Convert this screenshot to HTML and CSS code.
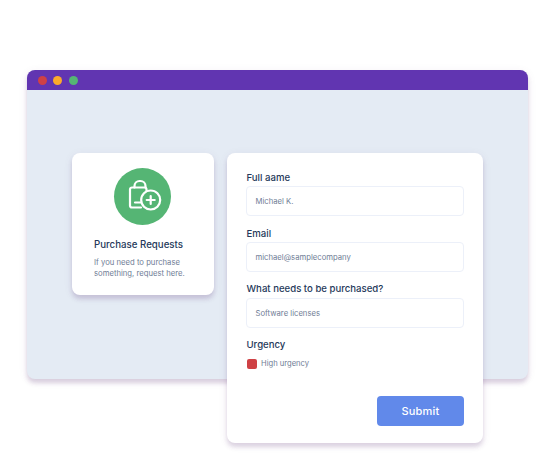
FILE: index.html
```html
<!DOCTYPE html>
<html lang="en">
<head>
<meta charset="utf-8">
<title>Purchase Requests</title>
<link rel="stylesheet" href="styles.css">
</head>
<body>
<div class="window">
  <div class="titlebar">
    <span class="dot dot-red"></span>
    <span class="dot dot-amber"></span>
    <span class="dot dot-green"></span>
  </div>
  <div class="content">
    <section class="card intro">
      <div class="badge">
        <svg class="badge-icon" viewBox="0 0 36 36" width="36" height="36" fill="none" stroke="#fff" stroke-width="2.200" stroke-linecap="round" stroke-linejoin="round">
          <path d="M14 29.500H5a2 2 0 0 1-2-2V11.500a2 2 0 0 1 2-2h12.500a2 2 0 0 1 2 2v1.500"/>
          <path d="M7.500 9.500V8a5 5 0 0 1 5-5h1a5 5 0 0 1 5 5v1.500"/>
          <path d="M8 24.500h5.500"/>
          <circle cx="23.700" cy="22" r="9.500"/>
          <path d="M23.700 18v8M19.700 22h8"/>
        </svg>
      </div>
      <h2 class="intro-title">Purchase Requests</h2>
      <p class="intro-text">If you need to purchase something, request here.</p>
    </section>
    <section class="card form">
      <div class="label">Full aame</div>
      <div class="field">Michael K.</div>
      <div class="label">Email</div>
      <div class="field">michael@samplecompany</div>
      <div class="label label-tight">What needs to be purchased?</div>
      <div class="field">Software licenses</div>
      <div class="label label-tight">Urgency</div>
      <div class="check-row"><span class="check"></span><span class="check-text">High urgency</span></div>
      <div class="actions"><button class="submit" type="button">Submit</button></div>
    </section>
  </div>
</div>
</body>
</html>
```
FILE: styles.css
```css
* { box-sizing: border-box; }
html, body { margin: 0; padding: 0; }
body {
  width: 555px;
  height: 475px;
  overflow: hidden;
  background: #fff;
  padding: 70px 27px 0;
  font-family: Inter, "Liberation Sans", sans-serif;
}
.window {
  width: 501px;
  height: 309px;
  border-radius: 8px;
  background: #e4ebf4;
  box-shadow: 0 4px 4px rgba(96, 54, 120, 0.2), 0 2px 10px rgba(96, 54, 120, 0.08);
}
.titlebar {
  height: 20px;
  background: #6135b1;
  border-radius: 8px 8px 0 0;
  display: flex;
  align-items: center;
  gap: 6.500px;
  padding-left: 10.500px;
}
.dot { width: 9px; height: 9px; border-radius: 50%; }
.dot-red { background: #cf4145; }
.dot-amber { background: #fcaa2b; }
.dot-green { background: #55b574; }
.content {
  display: flex;
  align-items: flex-start;
  gap: 12.500px;
  padding: 63px 0 0 45px;
}
.card {
  background: #fff;
  border-radius: 8px;
  box-shadow: 0 4px 4px rgba(96, 54, 120, 0.18), 0 2px 10px rgba(96, 54, 120, 0.08);
}
.intro {
  width: 142px;
  height: 142px;
  padding: 15px 22px 0;
}
.badge {
  width: 57px;
  height: 57px;
  margin: 0 0 0 20px;
  border-radius: 50%;
  background: #55b574;
  padding: 10px 0 0 13px;
}
.badge-icon { display: block; }
.intro-title {
  margin: 13px 0 0;
  font-size: 9.700px;
  line-height: 14px;
  font-weight: 500;
  color: #25395a;
  white-space: nowrap;
}
.intro-text {
  margin: 5px -10px 0 0;
  font-size: 7.700px;
  line-height: 11px;
  color: #6f7d96;
}
.form {
  width: 256.500px;
  height: 290px;
  padding: 18px 19.500px 0 19.500px;
}
.label {
  height: 15px;
  margin-left: 0.500px;
  font-size: 9.600px;
  line-height: 12px;
  font-weight: 500;
  color: #25395a;
  padding-top: 1px;
  white-space: nowrap;
}
.label-tight { padding-top: 0; }
.field {
  height: 30px;
  margin-bottom: 11px;
  border: 1px solid #ecf0f9;
  border-radius: 4px;
  padding-left: 8.500px;
  font-size: 7.700px;
  line-height: 29px;
  color: #6f7d96;
}
.check-row {
  display: flex;
  align-items: center;
  gap: 4.500px;
  margin: 5px 0 0 0.500px;
}
.check {
  width: 10px;
  height: 10px;
  border-radius: 2px;
  background: #cf4145;
}
.check-text { font-size: 7.600px; line-height: 10px; color: #6f7d96; }
.actions {
  display: flex;
  justify-content: flex-end;
  margin-top: 27px;
}
.submit {
  width: 87px;
  height: 30px;
  border: 0;
  border-radius: 4px;
  background: #6189ea;
  color: #fff;
  font-family: inherit;
  font-size: 11px;
  font-weight: 500;
  letter-spacing: 0.200px;
  padding: 0 0 0 1px;
}
```
